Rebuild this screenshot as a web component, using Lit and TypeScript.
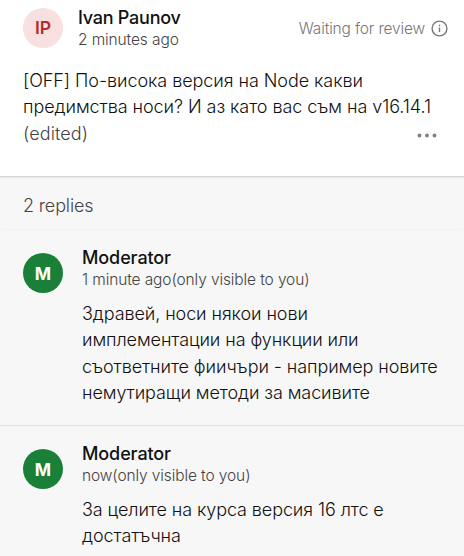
import { LitElement, html, css } from "lit";
import { customElement } from "lit/decorators.js";

@customElement("app-root")
export class AppRoot extends LitElement {
  static styles = css`
    :host { display: block; height: 556px; overflow: hidden; background: #f7f7f7; font-family: Inter, "Liberation Sans", sans-serif; font-weight: 300; color: #111; }
    * { box-sizing: border-box; }
    .question { background: #fff; height: 176px; padding: 7px 16px 0 23px; }
    .head { display: flex; height: 42px; }
    .avatar { width: 40px; height: 40px; border-radius: 50%; display: grid; place-items: center; font-weight: 700; font-size: 17.5px; flex: none; }
    .pink { background: #f8e0e0; color: #b32d2f; font-weight: 600; margin: 1px 15px 0 0; }
    .pink span { transform: translateY(-1px); }
    .green { background: #1a8038; color: #fff; margin: 6px 19px 0 0; }
    .who { flex: 1; }
    .name { font-size: 18px; line-height: 22px; font-weight: 500; letter-spacing: -0.1px; white-space: nowrap; }
    .head .name { letter-spacing: -0.25px; }
    .time { font-size: 15.5px; line-height: 22px; letter-spacing: -0.11px; color: #444; white-space: nowrap; }
    .status { display: flex; align-items: center; gap: 6px; height: 42px; color: #777; font-size: 15.5px; letter-spacing: -0.16px; white-space: nowrap; }
    .body { font-size: 18px; line-height: 26.4px; letter-spacing: -0.065px; }
    .line { white-space: nowrap; }
    .question .body { margin-top: 19px; }
    .last { display: flex; justify-content: space-between; align-items: center; color: #444; letter-spacing: 0.1px; }
    .dots { margin: 3px 11px 0 0; }
    .replies { height: 54px; padding: 17px 23px 0; border-top: 1px solid #d2d2d2; border-bottom: 1px solid #f2f2f2; box-shadow: inset 0 2px 2px -1px #e8e8e8; font-size: 18px; line-height: 24px; letter-spacing: -0.14px; color: #444; }
    .reply { display: flex; padding: 17px 23px 0; height: 196px; border-bottom: 1px solid #e2e2e2; }
    .reply .body { margin-top: 10px; line-height: 26.3px; letter-spacing: -0.09px; }
  `;

  private reply(time: string, lines: string[]) {
    return html`<article class="reply">
      <div class="avatar green">M</div>
      <div class="who">
        <div class="name">Moderator</div>
        <div class="time">${time}</div>
        <div class="body">${lines.map((l) => html`<div class="line">${l}</div>`)}</div>
      </div>
    </article>`;
  }

  render() {
    return html`
      <section class="question">
        <div class="head">
          <div class="avatar pink"><span>IP</span></div>
          <div class="who"><div class="name">Ivan Paunov</div><div class="time">2 minutes ago</div></div>
          <div class="status"><span>Waiting for review</span>
            <svg width="17" height="17" viewBox="0 0 17 17" fill="none" stroke="#777" stroke-width="1.4"><circle cx="8.5" cy="8.5" r="7.4" /><path d="M8.5 7.5v4.5M8.5 4.8v1.5" /></svg>
          </div>
        </div>
        <div class="body">
          <div class="line">[OFF] По-висока версия на Node какви</div>
          <div class="line">предимства носи? И аз като вас съм на v16.14.1</div>
          <div class="line last"><span>(edited)</span>
            <svg class="dots" width="20" height="5" viewBox="0 0 20 5" fill="#808080"><circle cx="2.5" cy="2.5" r="1.9" /><circle cx="10" cy="2.5" r="1.9" /><circle cx="17.5" cy="2.5" r="1.9" /></svg>
          </div>
        </div>
      </section>
      <div class="replies">2 replies</div>
      ${this.reply("1 minute ago(only visible to you)", ["Здравей, носи някои нови", "имплементации на функции или", "съответните фиичъри - например новите", "немутиращи методи за масивите"])}
      ${this.reply("now(only visible to you)", ["За целите на курса версия 16 лтс е", "достатъчна"])}
    `;
  }
}
